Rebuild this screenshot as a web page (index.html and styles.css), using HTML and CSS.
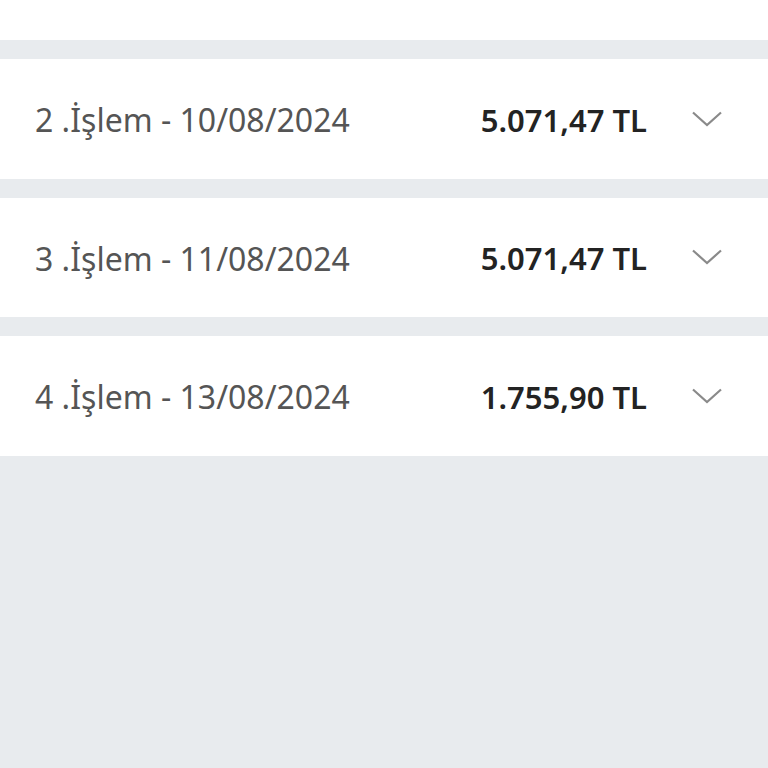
FILE: index.html
```html
<!DOCTYPE html>
<html lang="tr">
<head>
    <meta charset="UTF-8">
    <meta name="viewport" content="width=device-width, initial-scale=1.0">
    <title>İşlemler</title>
    <link rel="stylesheet" href="styles.css">
</head>
<body>
    <div class="list">
        <!-- Previous row, scrolled mostly out of view -->
        <div class="row"></div>

        <!-- Transaction rows -->
        <div class="row">
            <span class="label">2 .İşlem - 10/08/2024</span>
            <span class="amount">5.071,47 TL</span>
            <svg class="chevron" viewBox="0 0 30 16"><path d="M1 1.5 L15 14 L29 1.5" /></svg>
        </div>
        <div class="row">
            <span class="label">3 .İşlem - 11/08/2024</span>
            <span class="amount">5.071,47 TL</span>
            <svg class="chevron" viewBox="0 0 30 16"><path d="M1 1.5 L15 14 L29 1.5" /></svg>
        </div>
        <div class="row">
            <span class="label">4 .İşlem - 13/08/2024</span>
            <span class="amount">1.755,90 TL</span>
            <svg class="chevron" viewBox="0 0 30 16"><path d="M1 1.5 L15 14 L29 1.5" /></svg>
        </div>
    </div>
</body>
</html>
```

FILE: styles.css
```css
body {
    font-family: "Noto Sans", "Open Sans", sans-serif;
    margin: 0;
    padding: 0;
    background-color: #e8ebee;
    height: 768px;
    overflow: hidden;
}
.list {
    display: flex;
    flex-direction: column;
    gap: 19px;
    margin-top: -79.5px;
}
.row {
    display: flex;
    align-items: center;
    height: 119.5px;
    padding: 0 46px 0 35px;
    background: #fff;
}
.label {
    flex: 1;
    font-size: 32px;
    color: #555;
    padding-top: 2px;
}
.amount {
    font-size: 31px;
    font-weight: 600;
    color: #232323;
    padding-top: 2px;
}
.chevron {
    width: 30px;
    height: 16px;
    margin-left: 45px;
    fill: none;
    stroke: #8a8a8a;
    stroke-width: 2.2;
}
```
